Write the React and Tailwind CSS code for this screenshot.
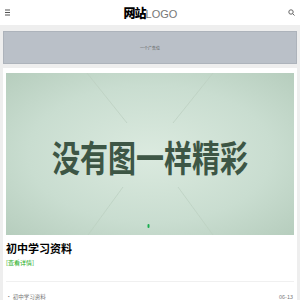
export default function App() {
  const cjk = { fontFamily: '"Noto Sans CJK SC", "Noto Sans", sans-serif' }
  return (
    <div className="w-[300px] h-[300px] overflow-hidden bg-[#eeeeee]" style={cjk}>
      {/* Header */}
      <div className="h-[25px] bg-white flex items-center justify-between px-[4px]">
        <svg width="6" height="7" viewBox="0 0 6 7" className="ml-[1px]">
          <rect x="0" y="0.5" width="5" height="1" fill="#555" />
          <rect x="0" y="3" width="5" height="1" fill="#555" />
          <rect x="0" y="5.5" width="5" height="1" fill="#555" />
        </svg>
        <div className="flex items-baseline leading-none ml-[2px] pt-[2px]">
          <span className="text-[12px] font-black text-black tracking-[-1px]">网站</span>
          <span className="text-[11px] font-light text-[#777]" style={{ fontFamily: '"Liberation Sans", sans-serif' }}>LOGO</span>
        </div>
        <svg width="7" height="7" viewBox="0 0 7 7" className="mr-[1px]">
          <circle cx="3" cy="3" r="2.2" fill="none" stroke="#666" strokeWidth="1" />
          <line x1="4.6" y1="4.6" x2="6.5" y2="6.5" stroke="#666" strokeWidth="1" />
        </svg>
      </div>

      <div className="px-[3px] pt-[6px]">
        {/* Ad */}
        <div className="h-[33px] bg-[#bac0c8] border border-[#adb3bb] flex items-center justify-center">
          <span className="text-[4px] text-[#555]">一个广告位</span>
        </div>

        {/* Card */}
        <div className="mt-[4px] bg-white px-[3px] pt-[5px]">
          <div
            className="relative h-[162px] flex items-center justify-center overflow-hidden"
            style={{ background: 'radial-gradient(ellipse at center, #dbeadf 0%, #c9ddd0 60%, #b6cdbd 100%)' }}
          >
            <svg className="absolute inset-0" width="288" height="162" viewBox="0 0 288 162">
              <g stroke="#bcd0c2" strokeWidth="0.8">
                <line x1="81" y1="0" x2="121" y2="50" />
                <line x1="207" y1="0" x2="167" y2="50" />
                <line x1="117" y1="114" x2="82" y2="162" />
                <line x1="172" y1="114" x2="207" y2="162" />
              </g>
              <rect x="141.5" y="151" width="2" height="4" rx="1" fill="#1aad50" />
            </svg>
            <span className="relative text-[28px] font-bold text-[#3d5645] leading-none scale-y-[1.3] mt-[4px]">
              没有图一样精彩
            </span>
          </div>
          <div className="pt-[6px] text-[11px] font-bold text-black leading-[14px]">初中学习资料</div>
          <div className="mt-[4px] text-[6px] text-[#1aad19] leading-[8px]">[查看详情]</div>
          <div className="mt-[14px] h-px bg-[#f0f0f0]" />
          <div className="flex justify-between items-center pt-[12px] text-[5.5px] text-[#777] leading-[7px]">
            <span>• 初中学习资料</span>
            <span className="mr-[1px]">06-13</span>
          </div>
        </div>
      </div>
    </div>
  )
}
